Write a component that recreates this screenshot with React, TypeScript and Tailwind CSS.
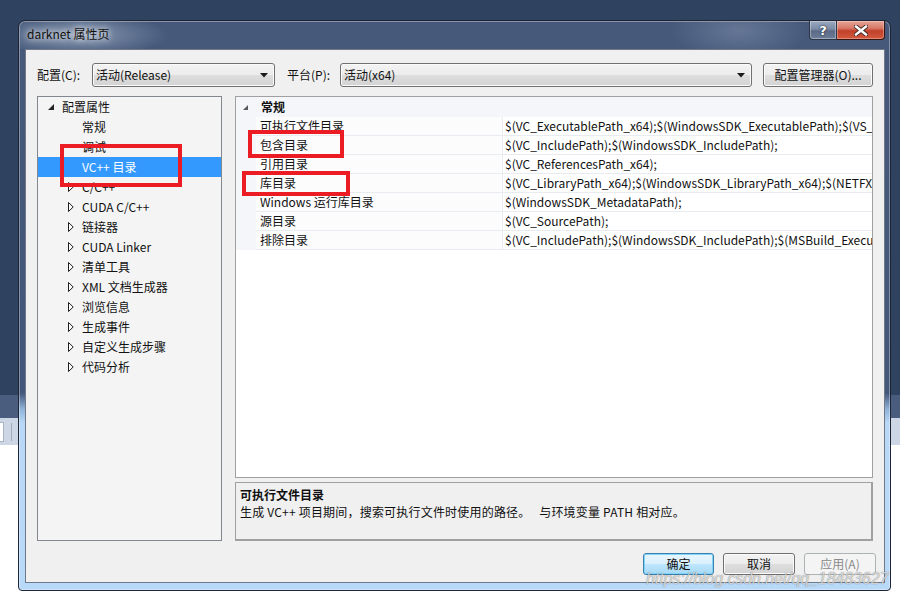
import React from "react";

const treeItems: { label: string; expandable: boolean; selected?: boolean }[] = [
  { label: "常规", expandable: false },
  { label: "调试", expandable: false },
  { label: "VC++ 目录", expandable: false, selected: true },
  { label: "C/C++", expandable: true },
  { label: "CUDA C/C++", expandable: true },
  { label: "链接器", expandable: true },
  { label: "CUDA Linker", expandable: true },
  { label: "清单工具", expandable: true },
  { label: "XML 文档生成器", expandable: true },
  { label: "浏览信息", expandable: true },
  { label: "生成事件", expandable: true },
  { label: "自定义生成步骤", expandable: true },
  { label: "代码分析", expandable: true },
];

const props: [string, string][] = [
  ["可执行文件目录", "$(VC_ExecutablePath_x64);$(WindowsSDK_ExecutablePath);$(VS_ExecutablePath);$(MSBuild_ExecutablePath)"],
  ["包含目录", "$(VC_IncludePath);$(WindowsSDK_IncludePath);"],
  ["引用目录", "$(VC_ReferencesPath_x64);"],
  ["库目录", "$(VC_LibraryPath_x64);$(WindowsSDK_LibraryPath_x64);$(NETFXKitsDir)Lib\\um\\x64"],
  ["Windows 运行库目录", "$(WindowsSDK_MetadataPath);"],
  ["源目录", "$(VC_SourcePath);"],
  ["排除目录", "$(VC_IncludePath);$(WindowsSDK_IncludePath);$(MSBuild_ExecutablePath);$(VC_LibraryPath_x64)"],
];

function ComboArrow() {
  return (
    <svg width="8" height="5" viewBox="0 0 8 5" className="shrink-0">
      <polygon points="0,0 8,0 4,4.5" fill="#1a1a1a" />
    </svg>
  );
}

function Combo({ width, text }: { width: string; text: string }) {
  return (
    <div
      className={`${width} h-[24px] shrink-0 rounded-[3px] border border-[#707070] bg-[linear-gradient(to_bottom,#f3f3f3_0%,#ececec_50%,#dedede_51%,#d3d3d3_100%)] shadow-[inset_0_0_0_1px_#fbfbfb] flex items-center pl-[3px] pr-[6px] justify-between`}
    >
      <span className="text-[12px] text-[#111]">{text}</span>
      <ComboArrow />
    </div>
  );
}

function FilledTri({ color }: { color: string }) {
  return (
    <svg width="6" height="6" viewBox="0 0 6 6" className="shrink-0">
      <polygon points="6,0 6,6 0,6" fill={color} />
    </svg>
  );
}

function OpenTri() {
  return (
    <svg width="6" height="10" viewBox="0 0 6 10" className="shrink-0">
      <polygon points="0.5,0.5 5.2,5 0.5,9.5" fill="#fff" stroke="#1e1e1e" strokeWidth="1" />
    </svg>
  );
}

export default function App() {
  return (
    <div className="relative w-[900px] h-[599px] overflow-hidden bg-[#2f425f] font-['Noto_Sans_CJK_SC','Noto_Sans',sans-serif]">
      {/* background window peeking out */}
      <div className="absolute left-0 top-[395px] w-[900px] h-[204px] flex flex-col">
        <div className="h-[23px] bg-[#4a5d7e]" />
        <div className="h-[27px] bg-[#cdd6e5] flex items-center">
          <div className="w-[4px] h-[20px] bg-white border-y border-r border-[#a9b3c4]" />
          <div className="ml-[7px] w-px h-[18px] bg-[#a2abba]" />
        </div>
        <div className="flex-1 bg-white" />
      </div>

      {/* dialog */}
      <div className="absolute left-[18px] top-[20px] w-[873px] h-[571px] rounded-t-[7px] rounded-b-[4px] border border-[#1b2535] bg-[linear-gradient(to_bottom,#46597a_0px,#43577a_372px,#8fb2d9_388px,#b9d8f7_402px,#b9d9f8_100%)] shadow-[inset_0_0_0_1px_rgba(255,255,255,0.35)] flex flex-col">
        {/* title bar */}
        <div className="relative h-[28px] flex items-start justify-between bg-[radial-gradient(ellipse_90px_22px_at_60px_14px,rgba(190,205,225,0.55),transparent),radial-gradient(ellipse_70px_30px_at_720px_10px,rgba(160,175,200,0.35),transparent)] rounded-t-[6px]">
          <span className="ml-[8px] mt-[4px] text-[12px] text-[#101010] [text-shadow:0_0_6px_rgba(255,255,255,0.9),0_0_10px_rgba(255,255,255,0.7)]">
            darknet 属性页
          </span>
          <div className="mr-[5px] flex h-[19px]">
            <div className="w-[28px] h-[19px] rounded-bl-[4px] border border-[#2a3548] border-t-0 bg-[linear-gradient(to_bottom,#9aa8bf_0%,#7c8ba6_45%,#5b6b87_55%,#6d7d99_100%)] shadow-[inset_0_0_0_1px_rgba(255,255,255,0.35)] flex items-center justify-center">
              <span className="text-[13px] font-bold leading-none text-white [text-shadow:0_0_2px_#1b2535,0_0_1px_#1b2535] font-['DejaVu_Sans',sans-serif]">?</span>
            </div>
            <div className="w-[48px] h-[19px] rounded-br-[4px] border border-[#3a1410] border-t-0 border-l-0 bg-[linear-gradient(to_bottom,#e8a598_0%,#d77866_40%,#c2402a_55%,#d35a3f_100%)] shadow-[inset_0_0_0_1px_rgba(255,255,255,0.3)] flex items-center justify-center">
              <svg width="14" height="11" viewBox="0 0 14 11">
                <path d="M2 1.5 L12 9.5 M12 1.5 L2 9.5" stroke="#3a2622" strokeWidth="4.2" strokeLinecap="square" />
                <path d="M2 1.5 L12 9.5 M12 1.5 L2 9.5" stroke="#ffffff" strokeWidth="2.4" strokeLinecap="square" />
              </svg>
            </div>
          </div>
        </div>

        {/* client area */}
        <div className="ml-[6px] w-[860px] h-[534px] border border-[#6f7987] bg-[#f0f0f0] flex flex-col pt-[13px] px-[11px] text-[12px] text-[#111]">
          {/* top row */}
          <div className="h-[24px] flex items-center">
            <span className="w-[55px] shrink-0">配置(C):</span>
            <Combo width="w-[183px]" text="活动(Release)" />
            <span className="ml-[12px] w-[53px] shrink-0">平台(P):</span>
            <Combo width="w-[412px]" text="活动(x64)" />
            <div className="ml-[11px] w-[110px] h-[24px] shrink-0 rounded-[3px] border border-[#707070] bg-[linear-gradient(to_bottom,#f3f3f3_0%,#ececec_50%,#dedede_51%,#d3d3d3_100%)] shadow-[inset_0_0_0_1px_#fbfbfb] flex items-center justify-center">
              配置管理器(O)...
            </div>
          </div>

          {/* main */}
          <div className="mt-[9px] h-[445px] flex">
            {/* tree */}
            <div className="relative w-[185px] shrink-0 border border-[#828790] bg-[#f4f4f4] flex flex-col">
              <div className="h-[20px] flex items-center">
                <div className="ml-[10px] w-[14px]">
                  <FilledTri color="#262626" />
                </div>
                <span>配置属性</span>
              </div>
              {treeItems.map((it) => (
                <div
                  key={it.label}
                  className={`h-[20px] flex items-center ${it.selected ? "bg-[#3399ff] text-white" : ""}`}
                >
                  <div className="ml-[30px] w-[14px] flex items-center">{it.expandable ? <OpenTri /> : null}</div>
                  <span>{it.label}</span>
                </div>
              ))}
              <div className="absolute left-[22px] top-[47px] w-[122px] h-[43px] border-[4px] border-[#ec1c24]" />
            </div>

            {/* right column */}
            <div className="ml-[13px] w-[638px] flex flex-col">
              <div className="relative h-[382px] border border-[#a0a0a0] bg-white overflow-hidden">
                <div className="h-[20px] bg-[#f4f6fa] flex items-center">
                  <div className="ml-[7px] w-[18px]">
                    <svg width="5" height="5" viewBox="0 0 5 5">
                      <polygon points="5,0 5,5 0,5" fill="#5a5a5a" />
                    </svg>
                  </div>
                  <span className="font-bold">常规</span>
                </div>
                {props.map(([name, value]) => (
                  <div key={name} className="h-[19px] flex bg-[#f4f6fa]">
                    <div className="ml-[20px] w-[247px] shrink-0 bg-[#fcfcfd] border-b border-r border-[#e8ebf0] flex items-center pl-[4px] whitespace-nowrap">
                      {name}
                    </div>
                    <div className="flex-1 bg-white border-b border-[#e8ebf0] flex items-center pl-[2px] whitespace-nowrap overflow-hidden">
                      {value}
                    </div>
                  </div>
                ))}
                <div className="absolute left-[12px] top-[33px] w-[96px] h-[28px] border-[4px] border-[#ec1c24]" />
                <div className="absolute left-[6px] top-[74px] w-[108px] h-[25px] border-[4px] border-[#ec1c24]" />
              </div>
              <div className="mt-[4px] h-[59px] border border-[#a0a0a0] border-b-2 border-r-2 bg-[#f0f0f0] pl-[4px] pt-[3px] flex flex-col">
                <span className="font-bold leading-[17px]">可执行文件目录</span>
                <span className="leading-[17px] tracking-[0.2px]">生成 VC++ 项目期间，搜索可执行文件时使用的路径。&nbsp;&nbsp;&nbsp;与环境变量 PATH 相对应。</span>
              </div>
            </div>
          </div>

          {/* buttons */}
          <div className="mt-[12px] h-[22px] flex justify-end mr-[-3px] gap-[9px]">
            <div className="w-[71px] h-[22px] rounded-[3px] border border-[#3c7fb1] bg-[linear-gradient(to_bottom,#eaf6fd_0%,#d9f0fc_50%,#bee6fd_51%,#a7d9f5_100%)] shadow-[inset_0_0_0_1px_#7fd6f8] flex items-center justify-center">
              确定
            </div>
            <div className="w-[72px] h-[22px] rounded-[3px] border border-[#707070] bg-[linear-gradient(to_bottom,#f3f3f3_0%,#ececec_50%,#dedede_51%,#d3d3d3_100%)] shadow-[inset_0_0_0_1px_#fbfbfb] flex items-center justify-center">
              取消
            </div>
            <div className="w-[72px] h-[22px] rounded-[3px] border border-[#adb2b5] bg-[#f4f4f4] text-[#8a8a8a] flex items-center justify-center">
              应用(A)
            </div>
          </div>
        </div>
      </div>

      {/* watermark */}
      <div className="absolute left-[646px] top-[567px] text-[16px] italic tracking-[-0.1px] font-['Liberation_Sans',sans-serif] text-white/70 [text-shadow:0_0_1px_rgba(40,40,40,0.7)]">
        https://blog.csdn.net/qq_18483627
      </div>
    </div>
  );
}
